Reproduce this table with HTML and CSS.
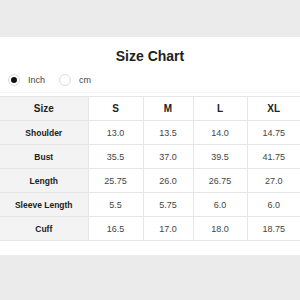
FILE: index.html
```html
<!DOCTYPE html>
<html lang="en">
  <head>
    <meta charset="UTF-8" />
    <title>Size Chart</title>
    <link rel="stylesheet" href="styles.css">
  </head>
  <body>
    <div class="chart-panel">
      <h1 class="chart-title">Size Chart</h1>

      <div class="unit-switch">
        <label class="unit-option">
          <span class="radio checked"></span>
          Inch
        </label>
        <label class="unit-option">
          <span class="radio"></span>
          cm
        </label>
      </div>

      <table class="size-table">
        <colgroup>
          <col class="col-label" />
          <col class="col-s" />
          <col class="col-m" />
          <col class="col-l" />
          <col class="col-xl" />
        </colgroup>
        <thead>
          <tr>
            <th class="row-label">Size</th>
            <th>S</th>
            <th>M</th>
            <th>L</th>
            <th>XL</th>
          </tr>
        </thead>
        <tbody>
          <tr>
            <th class="row-label">Shoulder</th>
            <td>13.0</td><td>13.5</td><td>14.0</td><td>14.75</td>
          </tr>
          <tr>
            <th class="row-label">Bust</th>
            <td>35.5</td><td>37.0</td><td>39.5</td><td>41.75</td>
          </tr>
          <tr>
            <th class="row-label">Length</th>
            <td>25.75</td><td>26.0</td><td>26.75</td><td>27.0</td>
          </tr>
          <tr>
            <th class="row-label">Sleeve Length</th>
            <td>5.5</td><td>5.75</td><td>6.0</td><td>6.0</td>
          </tr>
          <tr>
            <th class="row-label">Cuff</th>
            <td>16.5</td><td>17.0</td><td>18.0</td><td>18.75</td>
          </tr>
        </tbody>
      </table>
    </div>
  </body>
</html>
```

FILE: styles.css
```css
:root {
  --page-bg: #ebebeb;
  --label-bg: #f3f3f3;
  --border-color: #e6e6e6;
  --text-color: #222222;
  --text-light: #444444;
}

* {
  margin: 0;
  padding: 0;
  box-sizing: border-box;
}

body {
  font-family: "Liberation Sans", Arial, sans-serif;
  background-color: var(--page-bg);
  color: var(--text-color);
  padding-top: 37px;
}

.chart-panel {
  background-color: white;
  height: 218px;
  padding-top: 11px;
}

.chart-title {
  text-align: center;
  font-size: 14px;
  font-weight: bold;
  line-height: 17px;
  margin-bottom: 2px;
}

.unit-switch {
  display: flex;
  gap: 14px;
  padding-left: 8px;
  height: 26px;
  align-items: center;
  border-bottom: 1px solid #f6f6f6;
  margin-bottom: 3px;
}

.unit-option {
  display: flex;
  align-items: center;
  gap: 8px;
  font-size: 9px;
  color: var(--text-light);
}

.radio {
  width: 12px;
  height: 12px;
  border-radius: 50%;
  border: 1px solid #dddddd;
  display: flex;
  align-items: center;
  justify-content: center;
}

.radio.checked::after {
  content: "";
  width: 6px;
  height: 6px;
  border-radius: 50%;
  background-color: #111111;
}

.size-table {
  width: 100%;
  border-collapse: collapse;
  table-layout: fixed;
  font-size: 9px;
}

.col-label { width: 88px; }
.col-s { width: 55px; }
.col-m { width: 50px; }
.col-l { width: 54px; }

.size-table th,
.size-table td {
  height: 24px;
  text-align: center;
  border: 1px solid var(--border-color);
  color: var(--text-light);
}

.size-table tr > :first-child {
  border-left: 0;
}

.size-table tr > :last-child {
  border-right: 0;
}

.size-table th {
  color: var(--text-color);
  font-weight: bold;
}

.size-table thead th {
  font-size: 10px;
}

.size-table .row-label {
  background-color: var(--label-bg);
  font-size: 8.5px;
}

.size-table thead .row-label {
  font-size: 10px;
}
```
